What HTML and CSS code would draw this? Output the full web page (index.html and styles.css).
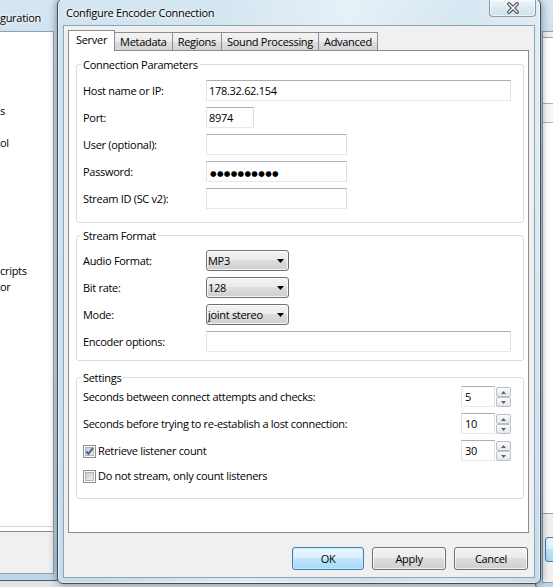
FILE: index.html
```html
<!DOCTYPE html>
<html lang="en">
<head>
<meta charset="utf-8">
<title>Configure Encoder Connection</title>
<link rel="stylesheet" href="styles.css">
</head>
<body>
<div class="win win-left">
  <div class="win-title"><span class="win-title-text">guration</span></div>
  <div class="win-client">
    <div class="left-panel">
      <ul class="left-list">
        <li>s</li><li></li><li>ol</li><li></li><li></li><li></li><li></li><li></li><li></li><li></li><li>cripts</li><li>or</li>
      </ul>
    </div>
  </div>
</div>

<div class="win win-right">
  <div class="win-title"></div>
  <div class="win-client">
    <div class="rw-bar"></div>
    <div class="rw-body"><div class="rw-head"></div></div>
    <div class="rw-foot"><div class="rw-btn"></div></div>
  </div>
</div>

<div class="dialog">
  <div class="titlebar">
    <span class="title">Configure Encoder Connection</span>
    <span class="close"><svg width="14" height="12" viewBox="0 0 14 12"><path d="M3 2 L11 10 M11 2 L3 10" stroke="#3d4046" stroke-width="3.6" stroke-linecap="round"/><path d="M3 2 L11 10 M11 2 L3 10" stroke="#ffffff" stroke-width="1.6" stroke-linecap="round"/></svg></span>
  </div>
  <div class="client">
    <div class="tabs">
      <span class="tab sel">Server</span>
      <span class="tab">Metadata</span>
      <span class="tab">Regions</span>
      <span class="tab">Sound Processing</span>
      <span class="tab">Advanced</span>
    </div>
    <div class="page">
      <fieldset class="group g-conn">
        <legend>Connection Parameters</legend>
        <div class="form">
          <span class="lbl">Host name or IP:</span><div class="edit w-long">178.32.62.154</div>
          <span class="lbl">Port:</span><div class="edit w-port">8974</div>
          <span class="lbl">User (optional):</span><div class="edit w-mid"></div>
          <span class="lbl">Password:</span><div class="edit w-mid"><span class="dots">●●●●●●●●●●</span></div>
          <span class="lbl">Stream ID (SC v2):</span><div class="edit w-mid"></div>
        </div>
      </fieldset>

      <fieldset class="group g-stream">
        <legend>Stream Format</legend>
        <div class="form">
          <span class="lbl">Audio Format:</span><div class="combo"><span>MP3</span><svg width="7" height="4" viewBox="0 0 7 4"><path d="M0 0H7L3.5 4Z" fill="#000"/></svg></div>
          <span class="lbl">Bit rate:</span><div class="combo"><span>128</span><svg width="7" height="4" viewBox="0 0 7 4"><path d="M0 0H7L3.5 4Z" fill="#000"/></svg></div>
          <span class="lbl">Mode:</span><div class="combo"><span>joint stereo</span><svg width="7" height="4" viewBox="0 0 7 4"><path d="M0 0H7L3.5 4Z" fill="#000"/></svg></div>
          <span class="lbl">Encoder options:</span><div class="edit w-long"></div>
        </div>
      </fieldset>

      <fieldset class="group g-set">
        <legend>Settings</legend>
        <div class="set-rows">
          <div class="set-row">
            <span>Seconds between connect attempts and checks:</span>
            <div class="spin">
              <div class="edit spin-edit">5</div>
              <div class="spin-btns">
                <span class="sb"><svg width="5" height="3" viewBox="0 0 5 3"><path d="M0 3L2.5 0L5 3Z" fill="#56657c"/></svg></span>
                <span class="sb"><svg width="5" height="3" viewBox="0 0 5 3"><path d="M0 0H5L2.5 3Z" fill="#56657c"/></svg></span>
              </div>
            </div>
          </div>
          <div class="set-row">
            <span>Seconds before trying to re-establish a lost connection:</span>
            <div class="spin">
              <div class="edit spin-edit">10</div>
              <div class="spin-btns">
                <span class="sb"><svg width="5" height="3" viewBox="0 0 5 3"><path d="M0 3L2.5 0L5 3Z" fill="#56657c"/></svg></span>
                <span class="sb"><svg width="5" height="3" viewBox="0 0 5 3"><path d="M0 0H5L2.5 3Z" fill="#56657c"/></svg></span>
              </div>
            </div>
          </div>
          <div class="set-row">
            <span class="chk">
              <svg class="cb" width="13" height="13" viewBox="0 0 13 13"><defs><linearGradient id="cbg1" x1="0" y1="0" x2="1" y2="1"><stop offset="0" stop-color="#c4c9cf"/><stop offset="1" stop-color="#f4f4f4"/></linearGradient></defs><rect x="0.5" y="0.5" width="12" height="12" fill="#ffffff" stroke="#8e8f8f"/><rect x="2.5" y="2.5" width="8" height="8" fill="url(#cbg1)" stroke="#b3b7bd"/><path d="M3.2 6.3 L5.4 8.9 L9.9 3.1" fill="none" stroke="#4c5f8f" stroke-width="1.9" stroke-linejoin="round"/></svg>
              <span>Retrieve listener count</span>
            </span>
            <div class="spin">
              <div class="edit spin-edit">30</div>
              <div class="spin-btns">
                <span class="sb"><svg width="5" height="3" viewBox="0 0 5 3"><path d="M0 3L2.5 0L5 3Z" fill="#56657c"/></svg></span>
                <span class="sb"><svg width="5" height="3" viewBox="0 0 5 3"><path d="M0 0H5L2.5 3Z" fill="#56657c"/></svg></span>
              </div>
            </div>
          </div>
          <div class="set-row last">
            <span class="chk">
              <svg class="cb" width="13" height="13" viewBox="0 0 13 13"><defs><linearGradient id="cbg2" x1="0" y1="0" x2="1" y2="1"><stop offset="0" stop-color="#c4c9cf"/><stop offset="1" stop-color="#f4f4f4"/></linearGradient></defs><rect x="0.5" y="0.5" width="12" height="12" fill="#ffffff" stroke="#8e8f8f"/><rect x="2.5" y="2.5" width="8" height="8" fill="url(#cbg2)" stroke="#b3b7bd"/></svg>
              <span>Do not stream, only count listeners</span>
            </span>
          </div>
        </div>
      </fieldset>
    </div>
    <div class="buttons">
      <span class="btn btn-default btn-ok">OK</span>
      <span class="btn">Apply</span>
      <span class="btn">Cancel</span>
    </div>
  </div>
</div>
</body>
</html>
```

FILE: styles.css
```css
* { box-sizing: border-box; }
html, body { margin: 0; padding: 0; }
body {
  position: relative;
  width: 553px;
  height: 587px;
  overflow: hidden;
  background: #dfe4e8;
  font-family: "Open Sans", "Noto Sans", "DejaVu Sans", sans-serif;
  font-size: 11px;
  line-height: 15px;
  letter-spacing: -0.3px;
  color: #000;
}

/* background windows */
.win {
  position: absolute;
  display: flex;
  flex-direction: column;
  border: 1px solid #4a5866;
  border-radius: 7px 7px 6px 6px;
  padding: 0 6px 6px;
  background: linear-gradient(180deg, #d8e8f3 0%, #d0e3f0 40px, #c8ddec 70%, #bdd6e9 100%);
}
.win-title {
  height: 40px;
  flex: none;
  display: flex;
  align-items: flex-end;
  padding-bottom: 6px;
  white-space: nowrap;
}
.win-left { left: -120px; top: -10px; width: 181px; height: 591px; }
.win-left .win-title { padding-left: 113px; }
.win-title-text { text-shadow: 0 0 6px #fff, 0 0 3px #fff; }
.win-client {
  flex: 1;
  display: flex;
  flex-direction: column;
  border: 1px solid #8ea0b0;
  background: #f0f0f0;
}
.left-panel {
  height: 500px;
  flex: none;
  background: #fff;
  border-bottom: 1px solid #898c95;
  box-shadow: inset 0 -4px 0 #fff, inset 0 -5px 0 #d6d6d6;
  overflow: hidden;
}
.left-list {
  list-style: none;
  margin: 0;
  padding: 71px 0 0 112px;
  line-height: 16px;
  white-space: nowrap;
}
.left-list li { height: 16px; }

.win-right { left: 535px; top: -10px; width: 40px; height: 600px; }
.rw-bar { height: 6px; flex: none; background: #eef0f2; border-bottom: 1px solid #9aa5b1; }
.rw-body { height: 475px; flex: none; background: #fff; padding-top: 65px; }
.rw-head { height: 20px; background: #f6f6f6; border-top: 1px solid #a9b4bf; border-bottom: 1px solid #a9b4bf; }
.rw-foot { flex: 1; border-top: 1px solid #a0a0a0; padding: 23px 0 0 2px; }
.rw-btn {
  height: 25px;
  border: 1px solid #3c7fb1;
  border-radius: 3px;
  background: linear-gradient(#eaf6fd 0%, #d9f0fc 50%, #bee6fd 50%, #a7d9f5 100%);
}

/* dialog */
.dialog {
  position: absolute;
  left: 57px;
  top: -2px;
  width: 484px;
  display: flex;
  flex-direction: column;
  border: 1px solid #3f4d5a;
  border-radius: 7px 7px 6px 6px;
  padding: 0 5px 5px;
  background:
    linear-gradient(100deg, rgba(255,255,255,0) 25%, rgba(255,255,255,.45) 50%, rgba(255,255,255,.1) 70%, rgba(255,255,255,.35) 85%, rgba(255,255,255,0) 100%),
    linear-gradient(180deg, #d3e5f1 0%, #d0e3f0 40px, #c6dcec 100%);
  box-shadow: 0 0 8px rgba(0,0,0,.45), inset 0 0 0 1px rgba(255,255,255,.55);
}
.titlebar {
  height: 26px;
  display: flex;
  align-items: flex-start;
}
.title {
  padding: 6px 0 0 3px;
  white-space: nowrap;
  text-shadow: 0 0 7px #fff, 0 0 3px #fff;
}
.close {
  margin: 1px -1px 0 auto;
  width: 47px;
  height: 17px;
  display: flex;
  align-items: center;
  justify-content: center;
  border: 1px solid rgba(40,50,60,.45);
  border-top: 0;
  border-radius: 0 0 4px 4px;
  background: linear-gradient(#f1f7fb, #dbe9f2 50%, #cfe2ee 100%);
  box-shadow: inset 0 0 0 1px rgba(255,255,255,.6);
}

.client {
  border: 1px solid #8fa3b3;
  background: #f0f0f0;
  padding: 4px 5px 7px 4px;
}

.tabs {
  display: flex;
  align-items: flex-end;
  height: 20px;
}
.tab {
  height: 18px;
  padding: 0 5px;
  margin-left: -1px;
  border: 1px solid #898c95;
  border-bottom: 0;
  line-height: 17px;
  white-space: nowrap;
  background: linear-gradient(#f3f3f3 0%, #ebebeb 50%, #dfdfdf 50%, #d3d3d3 100%);
}
.tab.sel {
  height: 21px;
  margin: 0 0 -1px 0;
  padding: 0 7px 2px;
  line-height: 18px;
  background: #fff;
  position: relative;
  z-index: 1;
}

.page {
  height: 483px;
  border: 1px solid #898c95;
  background: #fff;
  padding: 6px 4px 0 7px;
}

.group {
  margin: 0;
  min-width: 0;
  border: 1px solid #d5dfe5;
  border-radius: 3px;
  padding: 8px 12px 13px 6px;
  box-shadow: inset 1px 1px 0 #fff;
}
.group legend {
  padding: 0 2px;
  margin-left: -2px;
  line-height: 15px;
}
.g-stream { margin-top: 5px; padding-top: 7px; padding-bottom: 8px; }
.g-set { margin-top: 9px; padding-top: 1px; padding-bottom: 12px; }

.form {
  display: grid;
  grid-template-columns: 123px 1fr;
  grid-auto-rows: 21px;
  row-gap: 6px;
  align-items: center;
}
.lbl { white-space: nowrap; }

.edit {
  height: 21px;
  border: 1px solid;
  border-color: #abadb3 #dbdfe6 #e3e9ef #e2e3ea;
  background: #fff;
  padding: 0 2px;
  line-height: 19px;
  white-space: nowrap;
  overflow: hidden;
}
.w-long { width: 305px; }
.w-port { width: 48px; }
.w-mid { width: 141px; }
.dots {
  font-family: "DejaVu Sans", sans-serif;
  font-size: 7.5px;
  letter-spacing: 0.35px;
  padding-left: 1px;
}

.combo {
  width: 83px;
  height: 21px;
  border: 1px solid #707070;
  border-radius: 3px;
  background: linear-gradient(#f2f2f2 0%, #ebebeb 50%, #dddddd 50%, #cfcfcf 100%);
  box-shadow: inset 0 0 0 1px rgba(255,255,255,.75);
  display: flex;
  align-items: center;
  justify-content: space-between;
  padding: 0 4px 0 1px;
  white-space: nowrap;
}

.set-rows {
  display: flex;
  flex-direction: column;
  gap: 6px;
}
.set-row {
  height: 21px;
  display: flex;
  align-items: center;
  justify-content: space-between;
  white-space: nowrap;
}
.set-row.last { margin-top: -2px; }
.chk {
  display: flex;
  align-items: center;
  gap: 2px;
}
.cb { flex: none; margin-top: 2px; }

.spin {
  display: flex;
  gap: 1px;
}
.spin-edit { width: 34px; padding-left: 3px; }
.spin-btns {
  display: flex;
  flex-direction: column;
  padding-top: 1px;
}
.sb {
  width: 15px;
  height: 10px;
  border: 1px solid #b9bec7;
  border-radius: 2px;
  background: linear-gradient(#fbfbfb, #e4e6e9);
  display: flex;
  align-items: center;
  justify-content: center;
}

.buttons {
  display: flex;
  justify-content: flex-end;
  gap: 8px;
  margin: 14px 1px 0 0;
}
.btn {
  width: 74px;
  height: 23px;
  border: 1px solid #707070;
  border-radius: 3px;
  background: linear-gradient(#f2f2f2 0%, #ebebeb 50%, #dddddd 50%, #cfcfcf 100%);
  box-shadow: inset 0 0 0 1px rgba(255,255,255,.7);
  display: flex;
  align-items: center;
  justify-content: center;
}
.btn-ok { width: 72px; }
.btn-default {
  border-color: #3c7fb1;
  background: linear-gradient(#eaf6fd 0%, #d9f0fc 50%, #bee6fd 50%, #a7d9f5 100%);
  box-shadow: inset 0 0 0 1px rgba(200,236,252,.9);
}
```
